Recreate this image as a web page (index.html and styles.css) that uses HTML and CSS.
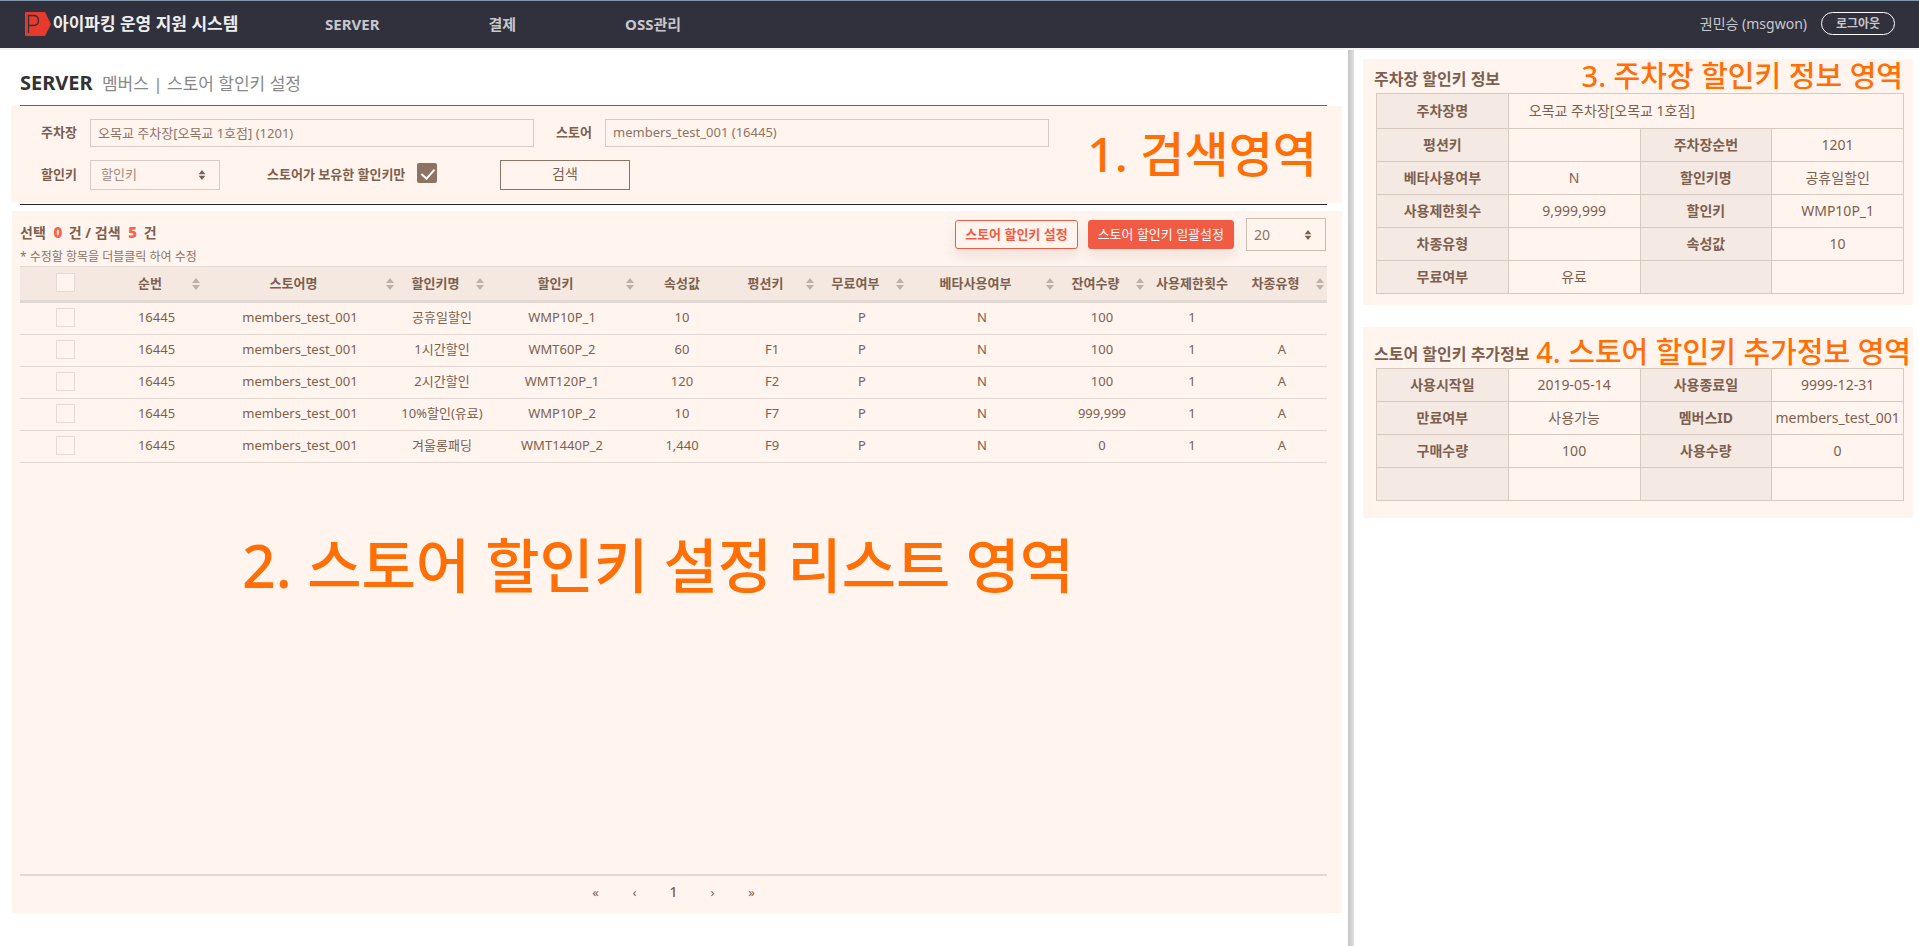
FILE: index.html
```html
<!DOCTYPE html>
<html lang="ko">
<head>
<meta charset="utf-8">
<title>아이파킹 운영 지원 시스템</title>
<link rel="stylesheet" href="styles.css">
</head>
<body>
<svg class="defs" aria-hidden="true">
  <symbol id="sort" viewBox="0 0 8 12"><path d="M4 0 8 5H0zM0 7h8L4 12z"/></symbol>
</svg>
<header class="topbar">
  <a class="logo" href="#">
    <svg class="logo-mark" viewBox="0 0 26 24" aria-hidden="true">
      <path fill="#e8392d" d="M1 0h19l6 12-6 12H1q-1 0-1-1V1q0-1 1-1z"/>
      <path fill="none" stroke="#30313d" stroke-width="1.3" d="M3.500 21V3.500H8q5.500 0 5.500 5T8 13.500H3.500"/>
    </svg>
    <span>아이파킹 운영 지원 시스템</span>
  </a>
  <nav class="menu">
    <a href="#">SERVER</a>
    <a href="#">결제</a>
    <a href="#">OSS관리</a>
  </nav>
  <span class="user">권민승 (msgwon)</span>
  <button class="logout" type="button">로그아웃</button>
</header>

<div class="workspace">
  <main class="content">
    <h1 class="title">SERVER <small>멤버스 | 스토어 할인키 설정</small></h1>
    <hr class="rule">
    <form class="search">
      <div class="row">
        <label for="lot">주차장</label>
        <input class="field" id="lot" type="text" value="오목교 주차장[오목교 1호점] (1201)">
        <label class="second" for="store">스토어</label>
        <input class="field" id="store" type="text" value="members_test_001 (16445)">
      </div>
      <div class="row">
        <label for="key">할인키</label>
        <span class="picker"><select id="key"><option>할인키</option></select><svg><use href="#sort"/></svg></span>
        <label class="owned" for="owned">스토어가 보유한 할인키만</label>
        <input class="tick" id="owned" type="checkbox" checked>
        <button class="find" type="button">검색</button>
      </div>
      <strong class="note note-1">1. 검색영역</strong>
    </form>
    <hr class="rule rule-dark">

    <section class="list">
      <div class="list-head">
        <div>
          <p class="count">선택 <b>0</b> 건 / 검색 <b>5</b> 건</p>
          <p class="hint">* 수정할 항목을 더블클릭 하여 수정</p>
        </div>
        <div class="tools">
          <button class="btn" type="button">스토어 할인키 설정</button>
          <button class="btn btn-fill" type="button">스토어 할인키 일괄설정</button>
          <span class="picker picker-size"><select aria-label="20"><option>20</option></select><svg><use href="#sort"/></svg></span>
        </div>
      </div>
      <table class="grid">
        <colgroup><col class="c90"><col class="c93"><col class="c194"><col class="c90"><col class="c150"><col class="c90"><col class="c90"><col class="c90"><col class="c150"><col class="c90"><col class="c90"><col class="c90"></colgroup>
        <thead>
          <tr>
            <th><input class="box" type="checkbox"></th>
            <th class="sortable">순번<svg><use href="#sort"/></svg></th>
            <th class="sortable">스토어명<svg><use href="#sort"/></svg></th>
            <th class="sortable">할인키명<svg><use href="#sort"/></svg></th>
            <th class="sortable">할인키<svg><use href="#sort"/></svg></th>
            <th>속성값</th>
            <th class="sortable">평션키<svg><use href="#sort"/></svg></th>
            <th class="sortable">무료여부<svg><use href="#sort"/></svg></th>
            <th class="sortable">베타사용여부<svg><use href="#sort"/></svg></th>
            <th class="sortable">잔여수량<svg><use href="#sort"/></svg></th>
            <th>사용제한횟수</th>
            <th class="sortable">차종유형<svg><use href="#sort"/></svg></th>
          </tr>
        </thead>
        <tbody>
          <tr><td><input class="box" type="checkbox"></td><td>16445</td><td>members_test_001</td><td>공휴일할인</td><td>WMP10P_1</td><td>10</td><td></td><td>P</td><td>N</td><td>100</td><td>1</td><td></td></tr>
          <tr><td><input class="box" type="checkbox"></td><td>16445</td><td>members_test_001</td><td>1시간할인</td><td>WMT60P_2</td><td>60</td><td>F1</td><td>P</td><td>N</td><td>100</td><td>1</td><td>A</td></tr>
          <tr><td><input class="box" type="checkbox"></td><td>16445</td><td>members_test_001</td><td>2시간할인</td><td>WMT120P_1</td><td>120</td><td>F2</td><td>P</td><td>N</td><td>100</td><td>1</td><td>A</td></tr>
          <tr><td><input class="box" type="checkbox"></td><td>16445</td><td>members_test_001</td><td>10%할인(유료)</td><td>WMP10P_2</td><td>10</td><td>F7</td><td>P</td><td>N</td><td>999,999</td><td>1</td><td>A</td></tr>
          <tr><td><input class="box" type="checkbox"></td><td>16445</td><td>members_test_001</td><td>겨울롱패딩</td><td>WMT1440P_2</td><td>1,440</td><td>F9</td><td>P</td><td>N</td><td>0</td><td>1</td><td>A</td></tr>
        </tbody>
      </table>
      <nav class="pager">
        <a href="#">«</a><a href="#">‹</a><a class="on" href="#">1</a><a href="#">›</a><a href="#">»</a>
      </nav>
      <strong class="note note-2">2. 스토어 할인키 설정 리스트 영역</strong>
    </section>
  </main>

  <aside class="side">
    <section class="card">
      <h2>주차장 할인키 정보</h2>
      <table class="info">
        <tr class="wide"><th>주차장명</th><td colspan="3">오목교 주차장[오목교 1호점]</td></tr>
        <tr><th>평션키</th><td></td><th>주차장순번</th><td>1201</td></tr>
        <tr><th>베타사용여부</th><td>N</td><th>할인키명</th><td>공휴일할인</td></tr>
        <tr><th>사용제한횟수</th><td>9,999,999</td><th>할인키</th><td>WMP10P_1</td></tr>
        <tr><th>차종유형</th><td></td><th>속성값</th><td>10</td></tr>
        <tr><th>무료여부</th><td>유료</td><th></th><td></td></tr>
      </table>
      <strong class="note note-3">3. 주차장 할인키 정보 영역</strong>
    </section>
    <section class="card card-extra">
      <h2>스토어 할인키 추가정보</h2>
      <table class="info">
        <tr><th>사용시작일</th><td>2019-05-14</td><th>사용종료일</th><td>9999-12-31</td></tr>
        <tr><th>만료여부</th><td>사용가능</td><th>멤버스ID</th><td>members_test_001</td></tr>
        <tr><th>구매수량</th><td>100</td><th>사용수량</th><td>0</td></tr>
        <tr><th></th><td></td><th></th><td></td></tr>
      </table>
      <strong class="note note-4">4. 스토어 할인키 추가정보 영역</strong>
    </section>
  </aside>
</div>
</body>
</html>
```
FILE: styles.css
```css
* { box-sizing: border-box; }
body {
  margin: 0;
  min-height: 100vh;
  display: flex;
  flex-direction: column;
  background: #fff;
  color: #7d5f4e;
  font: 13px/20px "Noto Sans", "Noto Sans CJK KR", sans-serif;
}
a { color: inherit; text-decoration: none; }
button, input, select { font: inherit; color: inherit; margin: 0; }
h1, h2, p { margin: 0; }
.defs { position: absolute; width: 0; height: 0; }

.topbar {
  display: flex;
  align-items: center;
  height: 48px;
  padding: 0 24px 2px 25px;
  border-top: 1px solid #7d95a6;
  background: #30313d;
  color: #c8c8cc;
  box-shadow: 0 2px 0 #f3f3f5;
}
.logo { display: flex; align-items: center; gap: 2px; width: 300px; color: #eee; font-size: 17px; font-weight: 700; }
.logo-mark { width: 26px; height: 24px; }
.menu { display: flex; flex: 1; gap: 109px; font-size: 15px; font-weight: 700; }
.user { margin-right: 14px; font-size: 14px; }
.logout {
  width: 74px;
  height: 23px;
  padding: 0;
  border: 1px solid #fff;
  border-radius: 12px;
  background: none;
  font-size: 12px;
  font-weight: 700;
  line-height: 16px;
}

.workspace { flex: 1; display: grid; grid-template-columns: 1348fr 571fr; padding-top: 2px; }
.content { display: flex; flex-direction: column; padding: 0 6px 33px 11px; }
.title { padding: 18px 9px 7px; color: #333; font-size: 20px; line-height: 29px; }
.title small { margin-left: 4px; color: #888; font-size: 17px; font-weight: 400; }
.rule { width: auto; margin: 0 15px 0 9px; border: 0; border-top: 1px solid #7d5f4e; }
.rule-dark { margin-top: 1px; border-color: #23242f; }

.search { position: relative; display: flex; flex-direction: column; gap: 13px; padding: 13px 293px 13px 30px; background: #fff4ee; }
.row { display: flex; align-items: center; }
.row label { width: 49px; padding-bottom: 2px; font-weight: 700; white-space: nowrap; }
.row .second { margin-left: 22px; }
.row .owned { width: 138px; margin-left: 47px; }
.field { flex: 1; min-width: 0; height: 28px; padding: 0 7px 2px; border: 1px solid #d8cbc5; background: none; color: #8d7364; outline: 0; }
.picker { position: relative; width: 130px; height: 30px; }
.picker select { width: 100%; height: 100%; padding: 0 10px 2px; border: 1px solid #d8cbc5; border-radius: 0; background: none; color: #a08a7e; appearance: none; }
.picker svg { position: absolute; right: 14px; top: 10px; width: 8px; height: 10px; fill: #7d5f4e; pointer-events: none; }
.picker-size { width: 80px; height: 33px; }
.picker-size select { padding: 0 7px; border-color: #cdbcb2; color: #8d7364; font-size: 14px; }
.picker-size svg { top: 12px; }
.tick { appearance: none; width: 20px; height: 20px; margin: 0 0 4px 12px; border-radius: 2px; background: #8d7364; position: relative; }
.tick:checked::after {
  content: "";
  position: absolute;
  left: 7px;
  top: 3px;
  width: 6px;
  height: 11px;
  border: solid #fff;
  border-width: 0 2px 2px 0;
  transform: rotate(42deg);
}
.find { width: 130px; height: 30px; margin-left: 63px; padding: 0 0 2px; border: 1px solid #8d7364; background: none; font-size: 14px; }

.list { position: relative; flex: 1; display: flex; flex-direction: column; margin: 6px 0 0 1px; padding: 7px 15px 0 8px; background: #fff4ee; }
.list-head { display: flex; justify-content: space-between; height: 48px; }
.count { padding-top: 4px; font-size: 14px; font-weight: 700; }
.count b { margin: 0 3px 0 4px; color: #f7634d; font-size: 15px; }
.hint { padding-top: 4px; color: #8d7364; font-size: 12px; }
.tools { display: flex; align-items: flex-start; gap: 10px; }
.btn {
  height: 29px;
  margin-top: 2px;
  padding: 0 9px 2px;
  border: 1px solid #f25b43;
  border-radius: 3px;
  background: #fff4ee;
  color: #f25b43;
  font-weight: 700;
  box-shadow: 0 8px 12px #7d5f4e1c;
}
.btn-fill { background: #f25b43; color: #fff; font-weight: 400; }
.tools .picker { margin: 0 1px 0 2px; }

.grid { width: 100%; table-layout: fixed; border-collapse: separate; border-spacing: 0; text-align: center; }
.c90 { width: 90px; }
.c93 { width: 93px; }
.c150 { width: 150px; }
.c194 { width: 194px; }
.grid th { position: relative; height: 37px; padding: 0 0 2px; border-top: 1px solid #e2d8d4; border-bottom: 3px solid #e2d8d4; background: #f4e8e0; white-space: nowrap; }
.grid .sortable { padding-right: 13px; }
.sortable svg { position: absolute; right: 3px; top: 11px; width: 8px; height: 12px; fill: #bfb0a8; }
.grid td { height: 32px; padding: 0 0 4px; border-bottom: 1px solid #e2d8d4; white-space: nowrap; }
.box { appearance: none; display: block; width: 19px; height: 19px; margin: 0 auto; border: 1px solid #e6dad2; background: #fff4ee; }
.grid td .box { margin-top: 2px; }

.pager { display: flex; justify-content: center; margin-top: auto; padding: 6px 0 11px; border-top: 2px solid #e6d8ce; }
.pager a { width: 39px; text-align: center; }
.pager .on { font-weight: 500; font-size: 14px; }

.side { padding: 9px 6px 0 15px; background: linear-gradient(90deg, #c6c6c6, #e0e0e0) left / 6px 100% no-repeat; }
.card { position: relative; padding: 7px 9px 11px 13px; background: #fff4ee; }
.card h2 { margin-left: -2px; font-size: 16px; line-height: 27px; }
.card-extra { margin-top: 22px; padding: 14px 9px 17px 13px; }
.info { width: 100%; table-layout: fixed; border-collapse: collapse; font-size: 14px; text-align: center; }
.info th, .info td { height: 33px; padding: 0; border: 1px solid #d8c9c0; white-space: nowrap; }
.info th { background: #f5e9e3; }
.info .wide td { height: 35px; padding-left: 20px; text-align: left; }

.note { position: absolute; color: #ff6f06; font-weight: 500; white-space: nowrap; }
.note-1 { right: 25px; top: 17px; font-size: 48px; line-height: 62px; }
.note-2 { left: 230px; top: 309px; font-size: 59px; line-height: 90px; }
.note-3 { right: 10px; top: -1px; font-size: 29px; line-height: 36px; }
.note-4 { right: 2px; top: 7px; font-size: 29px; line-height: 36px; }
```
